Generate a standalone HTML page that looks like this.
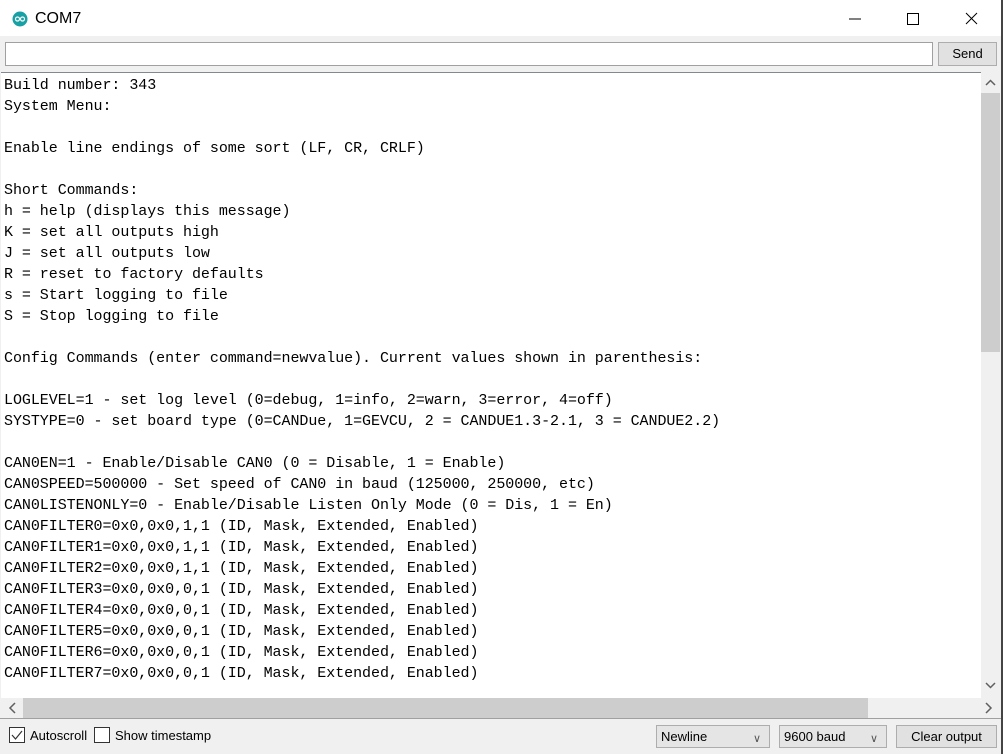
<!DOCTYPE html>
<html><head><meta charset="utf-8"><style>
*{margin:0;padding:0;box-sizing:border-box}
body{width:1003px;height:754px;overflow:hidden;background:#f0f0f0;font-family:"Liberation Sans",sans-serif;position:relative}
.abs{position:absolute}
#title{left:0;top:0;width:1003px;height:36px;background:#fff}
#title .t{left:35px;top:10px;font-size:16px;color:#000}
#out{left:1px;top:72px;width:980px;height:626px;background:#fff;border-top:1px solid #828790}
pre{position:absolute;left:3px;top:2px;font-family:"Liberation Mono",monospace;font-size:15px;line-height:21px;color:#000;letter-spacing:-0.05px}
.btn{background:#e1e1e1;border:1px solid #adadad;font-size:13px;text-align:center;color:#000}
.sel{background:#e5e5e5;border:1px solid #adadad;font-size:13px;padding-left:4px;color:#000}
.sel span{position:absolute;right:8px;top:3px;color:#555;font-size:11px}
</style></head><body>
<div id="title" class="abs">
<svg class="abs" style="left:12px;top:11px" width="16" height="16"><circle cx="8" cy="8" r="7.5" fill="#17a1a5"/><circle cx="5.5" cy="8" r="2" fill="none" stroke="#fff" stroke-width="1.2"/><circle cx="10.5" cy="8" r="2" fill="none" stroke="#fff" stroke-width="1.2"/></svg>
<div class="t abs">COM7</div>
<svg class="abs" style="left:840px;top:8px" width="150" height="22"><line x1="9" y1="11" x2="21" y2="11" stroke="#000"/><rect x="67.5" y="5.5" width="11" height="11" fill="none" stroke="#000"/><path d="M126 5L137 16M137 5L126 16" stroke="#000"/></svg>
</div>
<div class="abs" style="left:5px;top:42px;width:928px;height:24px;background:#fff;border:1px solid #a0a0a0"></div>
<div class="abs btn" style="left:938px;top:42px;width:59px;height:24px;line-height:22px">Send</div>
<div id="out" class="abs"><pre>Build number: 343
System Menu:

Enable line endings of some sort (LF, CR, CRLF)

Short Commands:
h = help (displays this message)
K = set all outputs high
J = set all outputs low
R = reset to factory defaults
s = Start logging to file
S = Stop logging to file

Config Commands (enter command=newvalue). Current values shown in parenthesis:

LOGLEVEL=1 - set log level (0=debug, 1=info, 2=warn, 3=error, 4=off)
SYSTYPE=0 - set board type (0=CANDue, 1=GEVCU, 2 = CANDUE1.3-2.1, 3 = CANDUE2.2)

CAN0EN=1 - Enable/Disable CAN0 (0 = Disable, 1 = Enable)
CAN0SPEED=500000 - Set speed of CAN0 in baud (125000, 250000, etc)
CAN0LISTENONLY=0 - Enable/Disable Listen Only Mode (0 = Dis, 1 = En)
CAN0FILTER0=0x0,0x0,1,1 (ID, Mask, Extended, Enabled)
CAN0FILTER1=0x0,0x0,1,1 (ID, Mask, Extended, Enabled)
CAN0FILTER2=0x0,0x0,1,1 (ID, Mask, Extended, Enabled)
CAN0FILTER3=0x0,0x0,0,1 (ID, Mask, Extended, Enabled)
CAN0FILTER4=0x0,0x0,0,1 (ID, Mask, Extended, Enabled)
CAN0FILTER5=0x0,0x0,0,1 (ID, Mask, Extended, Enabled)
CAN0FILTER6=0x0,0x0,0,1 (ID, Mask, Extended, Enabled)
CAN0FILTER7=0x0,0x0,0,1 (ID, Mask, Extended, Enabled)</pre></div>
<div class="abs" style="left:981px;top:72px;width:19px;height:626px;background:#f0f0f0"></div>
<div class="abs" style="left:981px;top:93px;width:19px;height:259px;background:#cdcdcd"></div>
<svg class="abs" style="left:981px;top:74px" width="19" height="624"><path d="M5 11L9.5 6.5L14 11" fill="none" stroke="#606060" stroke-width="1.5"/><path d="M5 609L9.5 613.5L14 609" fill="none" stroke="#606060" stroke-width="1.5"/></svg>
<div class="abs" style="left:1001px;top:0;width:2px;height:754px;background:#444"></div>
<div class="abs" style="left:1px;top:698px;width:980px;height:20px;background:#f0f0f0"></div>
<div class="abs" style="left:23px;top:698px;width:845px;height:20px;background:#cdcdcd"></div>
<svg class="abs" style="left:1px;top:698px" width="999" height="20"><path d="M14 5L9 10L14 15" fill="none" stroke="#606060" stroke-width="1.5"/><path d="M985 5L990 10L985 15" fill="none" stroke="#606060" stroke-width="1.5"/></svg>
<div class="abs" style="left:0;top:718px;width:1001px;height:1px;background:#a0a0a0"></div>
<div class="abs" style="left:9px;top:727px;width:16px;height:16px;background:#fff;border:1px solid #333"></div>
<svg class="abs" style="left:9px;top:727px" width="16" height="16"><path d="M3 8L6.5 12L13 4" fill="none" stroke="#333" stroke-width="1.2"/></svg>
<div class="abs" style="left:30px;top:728px;font-size:13px">Autoscroll</div>
<div class="abs" style="left:94px;top:727px;width:16px;height:16px;background:#fff;border:1px solid #333"></div>
<div class="abs" style="left:115px;top:728px;font-size:13px">Show timestamp</div>
<div class="abs sel" style="left:656px;top:725px;width:114px;height:23px;line-height:21px">Newline<span>&#8744;</span></div>
<div class="abs sel" style="left:779px;top:725px;width:108px;height:23px;line-height:21px">9600 baud<span>&#8744;</span></div>
<div class="abs btn" style="left:896px;top:725px;width:101px;height:23px;line-height:21px">Clear output</div>
</body></html>
